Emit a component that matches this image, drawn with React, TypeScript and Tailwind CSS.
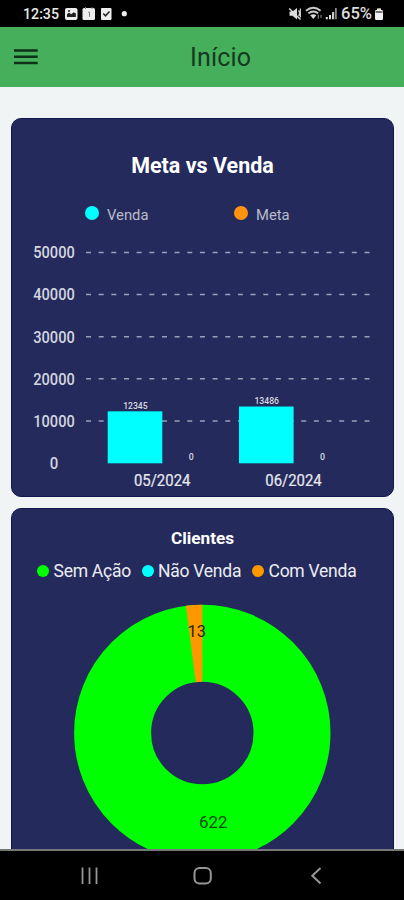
import React from "react";

type Month = {
  label: string;
  venda: number;
  meta: number;
  x: number;
};

const months: Month[] = [
  { label: "05/2024", venda: 12345, meta: 0, x: 107.7 },
  { label: "06/2024", venda: 13486, meta: 0, x: 239 },
];

const ticks = [50000, 40000, 30000, 20000, 10000, 0];

const BASE_Y = 463.3;
const STEP = 42.1;
const BAR_WIDTH = 54.6;

const clientes = [
  { label: "Sem Ação", color: "bg-[#00ff00]", gap: "mr-[10px]", width: "w-[78px]" },
  { label: "Não Venda", color: "bg-[#00ffff]", gap: "mr-[10px]", width: "w-[84px]" },
  { label: "Com Venda", color: "bg-[#ff9800]", gap: "", width: "w-[88px]" },
];

const StatusBar = () => (
  <div className="h-[27px] shrink-0 bg-black">
    <svg width="404" height="27" viewBox="0 0 404 27" className="block">
      <text x="23" y="19" fontSize="15.5" fontWeight="500" fill="#e8e8e8" textLength="36" lengthAdjust="spacingAndGlyphs">
        12:35
      </text>
      <rect x="65" y="8" width="12.5" height="12" rx="2" fill="#eee" />
      <path d="M67 17v-3l2.2-1.2 2 1.5 2.5-2 2.2 1.2v3.5z" fill="#222" />
      <circle cx="69" cy="11" r="1" fill="#222" />
      <rect x="82.5" y="8" width="12.5" height="12" rx="1.5" fill="#eee" />
      <path d="M85.5 7v2M92 7v2M88.2 12.2h1.3v4.5" stroke="#777" strokeWidth="1" fill="none" />
      <rect x="101" y="8" width="10.5" height="12" rx="1" fill="#eee" />
      <path d="M103.3 13.5l2.2 2.3 4-4.2" stroke="#222" strokeWidth="1.5" fill="none" />
      <circle cx="124.3" cy="13.7" r="2.6" fill="#eee" />
      <path d="M289.5 11.5h3l4.5-3.5v11.5l-4.5-3.7h-3z" fill="#ddd" />
      <path d="M289.2 8.5L300.5 19.5" stroke="#ddd" strokeWidth="1.5" />
      <path d="M298.7 10.2q1.8 3.5 0 6M300.4 8.5v9" stroke="#ccc" strokeWidth="1.2" fill="none" />
      <path d="M306 10.7q7.3-5.8 14.6 0M308.4 13.3q4.9-3.6 9.8 0" stroke="#ccc" strokeWidth="2" fill="none" />
      <path d="M310.3 15.2q3-1.8 6 0l-3 3.8z" fill="#ddd" />
      <path d="M318.3 14.5v4.3M321 18v-3.3" stroke="#777" strokeWidth="1.2" />
      <path d="M326.8 17v2.3M330 15v4.3" stroke="#ddd" strokeWidth="2" />
      <path d="M333.1 12v7.3" stroke="#ccc" strokeWidth="2.2" />
      <path d="M335.9 8v11.3" stroke="#999" strokeWidth="1.6" />
      <text x="341" y="19.2" fontSize="16" fontWeight="500" fill="#ddd" textLength="31" lengthAdjust="spacingAndGlyphs">
        65%
      </text>
      <rect x="375" y="10" width="8" height="10" rx="1.2" fill="#f2f2f2" />
      <path d="M377 9.2h4" stroke="#eee" strokeWidth="1.6" />
      <path d="M375.5 12h7" stroke="#777" strokeWidth="2" />
    </svg>
  </div>
);

const Header = () => (
  <header className="relative h-[60px] shrink-0 bg-[#45af5b] flex items-center justify-center">
    <button className="absolute left-[14px] top-[21px]" aria-label="Menu">
      <svg width="24" height="18" viewBox="0 0 24 18" className="block">
        <path d="M0 2.5h23.7M0 8.8h23.7M0 15h23.7" stroke="#0c3018" strokeWidth="2.4" />
      </svg>
    </button>
    <svg width="64" height="34" className="ml-[38px]">
      <text x="1" y="25.5" fontSize="25" fill="#16391f" textLength="61" lengthAdjust="spacing">
        Início
      </text>
    </svg>
  </header>
);

const BarChart = () => (
  <svg width="383" height="259" viewBox="11 238 383 259" className="block">
    {ticks.map((tick) => {
      const y = BASE_Y - (tick / 10000) * STEP;
      return (
        <g key={tick}>
          <text
            x={54}
            y={y + 5.5}
            textAnchor="middle"
            fontSize="15.6"
            fontWeight="500"
            fill="#d5d6e0"
            textLength={tick ? 41.5 : 8.5}
            lengthAdjust="spacingAndGlyphs"
          >
            {tick}
          </text>
          {tick > 0 && (
            <path d={`M86 ${y - 0.3}H370`} stroke="#9b9fb7" strokeWidth="1.5" strokeDasharray="5 7.66" />
          )}
        </g>
      );
    })}
    {months.map((month) => {
      const height = (month.venda / 10000) * STEP;
      const top = BASE_Y - height;
      return (
        <g key={month.label}>
          <rect x={month.x} y={top} width={BAR_WIDTH} height={height} fill="#00ffff" />
          <text x={month.x + 27.7} y={top - 2.8} textAnchor="middle" fontSize="8.6" fontWeight="500" fill="#d8d9e2">
            {month.venda}
          </text>
          <text x={month.x + 83.5} y="460.2" textAnchor="middle" fontSize="8.8" fontWeight="500" fill="#d8d9e2">
            {month.meta}
          </text>
          <text
            x={month.x + 54.5}
            y="485.7"
            textAnchor="middle"
            fontSize="15.6"
            fill="#e8e8ef"
            stroke="#e8e8ef"
            strokeWidth="0.2"
            textLength="56.5"
            lengthAdjust="spacingAndGlyphs"
          >
            {month.label}
          </text>
        </g>
      );
    })}
  </svg>
);

const MetaCard = () => (
  <section className="ml-[11px] mr-[10px] mt-[31px] h-[379px] shrink-0 overflow-hidden rounded-[10px] border border-[#12164f] bg-[#242b5c] flex flex-col">
    <h2 className="mt-[32px] h-[30px] text-center text-[21.5px] leading-[30px] font-bold text-white">
      Meta vs Venda
    </h2>
    <div className="mt-[21px] flex h-[26px] items-center text-[14.8px] text-[#b9bccb]">
      <span className="ml-[73px] mb-[4px] size-[14px] rounded-full bg-[#00ffff]" />
      <span className="ml-[8px] w-[127px]">Venda</span>
      <span className="mb-[4px] size-[14px] rounded-full bg-[#ff930f]" />
      <span className="ml-[8px]">Meta</span>
    </div>
    <div className="mt-auto -mx-px -mb-px">
      <BarChart />
    </div>
  </section>
);

const ClientesCard = () => (
  <section className="ml-[11px] mr-[10px] mt-[11px] h-[420px] shrink-0 overflow-hidden rounded-t-[10px] border border-[#12164f] bg-[#242b5c]">
    <h2 className="mt-[17px] h-[24px] text-center text-[17.2px] leading-[24px] font-bold text-white">
      Clientes
    </h2>
    <div className="mt-[9px] ml-[25px] flex h-[24px] items-center text-[#ededf3]">
      {clientes.map((item) => (
        <div key={item.label} className={`flex items-center ${item.gap}`}>
          <span className={`size-[12px] rounded-full ${item.color}`} />
          <span
            className={`ml-[4.5px] whitespace-nowrap text-[17.5px] leading-[24px] tracking-[-0.25px] ${item.width}`}
          >
            {item.label}
          </span>
        </div>
      ))}
    </div>
    <svg width="383" height="280" viewBox="11 583 383 280" className="-ml-px block">
      <circle cx="202.3" cy="733" r="89.7" fill="none" stroke="#00ff00" strokeWidth="77" />
      <path d="M185.9 605.8A128.2 128.2 0 0 1 202.3 604.8V681.8A51.2 51.2 0 0 0 195.7 682.2Z" fill="#ff9800" />
      <text x="196.7" y="637.3" textAnchor="middle" fontSize="16.5" fill="#2c2410">
        13
      </text>
      <text x="213.2" y="828.3" textAnchor="middle" fontSize="16.8" fill="#064d08">
        622
      </text>
    </svg>
  </section>
);

const NavBar = () => (
  <nav className="h-[51px] shrink-0 border-t-2 border-[#777] bg-black">
    <svg width="404" height="49" viewBox="0 851 404 49" className="block" fill="none" stroke="#969696">
      <path d="M82.5 867.5v16.5M89.5 867.5v16.5M96.5 867.5v16.5" strokeWidth="1.8" />
      <rect x="194.5" y="868" width="16.3" height="15.5" rx="5" strokeWidth="2" />
      <path d="M320.5 868l-8.2 7.7 8.2 7.8" strokeWidth="2" />
    </svg>
  </nav>
);

const App = () => {
  return (
    <div className="flex h-[900px] w-[404px] flex-col overflow-hidden bg-[#f0f4f4] font-['Roboto',sans-serif]">
      <StatusBar />
      <Header />
      <main className="flex min-h-0 flex-1 flex-col overflow-hidden">
        <MetaCard />
        <ClientesCard />
      </main>
      <NavBar />
    </div>
  );
};

export default App;
